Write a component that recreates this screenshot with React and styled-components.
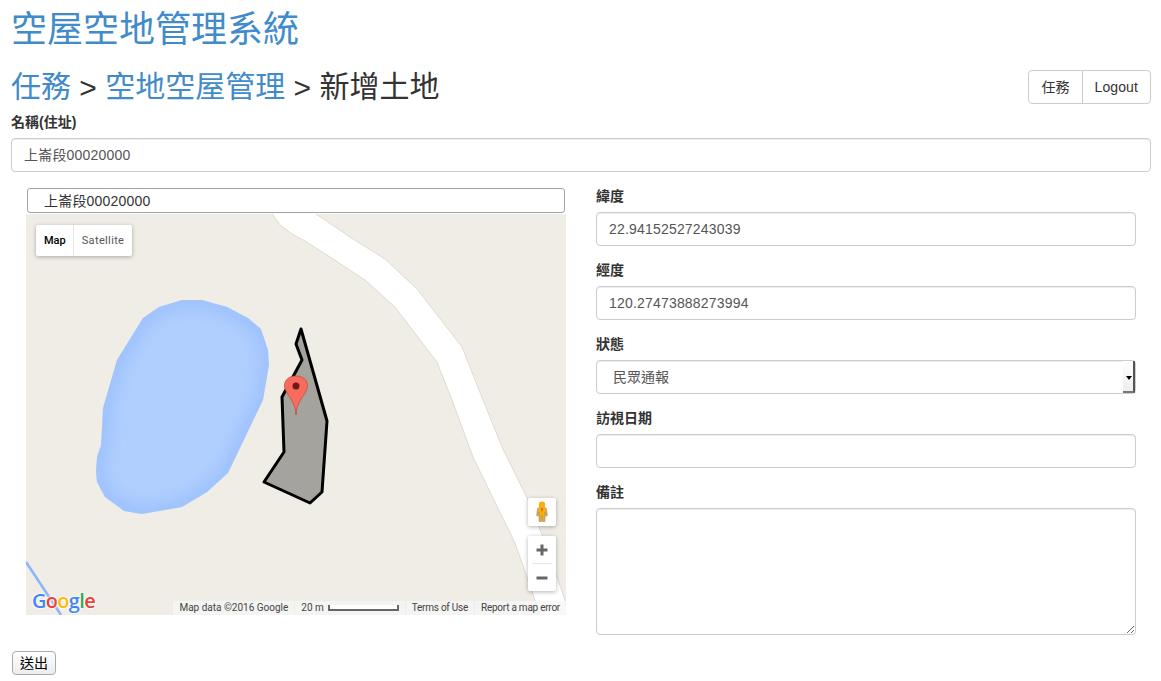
import React from 'react'
import styled, { createGlobalStyle } from 'styled-components'

const GlobalStyle = createGlobalStyle`
  * { box-sizing: border-box; }
  body {
    margin: 0;
    font-family: "Liberation Sans", "Noto Sans CJK TC", sans-serif;
    font-size: 14px;
    line-height: 20px;
    color: #333;
    background: #fff;
  }
`

const LAKE = 'M156 86 L176 86 L201 93 L222 104 L235 115 L242 136 L243 151 L237 186 L202 259 L181 278 L156 293 L116 300 L98 297 L79 283 L71 268 L70 258 L71 243 L75 231 L77 194 L91 146 L117 104 L133 93 Z'

function App() {
  return (
    <Page>
      <GlobalStyle />
      <Title><a href="#home">空屋空地管理系統</a></Title>
      <Header>
        <Crumbs>
          <a href="#tasks">任務</a> <small>&gt;</small> <a href="#land">空地空屋管理</a> <small>&gt;</small> 新增土地
        </Crumbs>
        <ButtonGroup>
          <GroupButton>任務</GroupButton>
          <GroupButton>Logout</GroupButton>
        </ButtonGroup>
      </Header>

      <Field>
        <Label>名稱(住址)</Label>
        <Input $cjk defaultValue="上崙段00020000" />
      </Field>

      <Columns>
        <div>
          <MapSearch defaultValue="上崙段00020000" />
          <MapCanvas>
            <MapDrawing />
            <TypeControl>
              <TypeButton $active>Map</TypeButton>
              <TypeButton>Satellite</TypeButton>
            </TypeControl>
            <Pegman>
              <svg width="14" height="22" viewBox="0 0 14 22">
                <path d="M4.6 6.2h4.8l2 1.4.9 7-1.4.5-.8-4-.2 9.4H7.6L7 14.5 6.4 20.5H4.1l-.2-9.4-.8 4-1.400-.5.9-7z" fill="#f6ae14" stroke="#9c9272" strokeWidth="0.7" />
                <circle cx="7" cy="3.8" r="3.2" fill="#f6ae14" />
                <path d="M5.8 7h2.4l-.5 3-.7 1-.7-1z" fill="#e2701c" />
              </svg>
            </Pegman>
            <ZoomControl>
              <ZoomButton>
                <svg width="12" height="12" viewBox="0 0 12 12"><path d="M4.5 0.5h3v4h4v3h-4v4h-3v-4h-4v-3h4z" fill="#666" /></svg>
              </ZoomButton>
              <ZoomDivider />
              <ZoomButton>
                <svg width="12" height="12" viewBox="0 0 12 12"><path d="M0.5 4.5h11v3h-11z" fill="#666" /></svg>
              </ZoomButton>
            </ZoomControl>
            <GoogleLogo>
              <span style={{ color: '#4285f4' }}>G</span>
              <span style={{ color: '#ea4335' }}>o</span>
              <span style={{ color: '#fbbc05' }}>o</span>
              <span style={{ color: '#4285f4' }}>g</span>
              <span style={{ color: '#34a853' }}>l</span>
              <span style={{ color: '#ea4335' }}>e</span>
            </GoogleLogo>
            <Attribution>
              <AttrItem>Map data ©2016 Google</AttrItem>
              <AttrItem>
                20 m
                <Scale />
              </AttrItem>
              <AttrItem $tight>Terms of Use</AttrItem>
              <AttrItem $tight>Report a map error</AttrItem>
            </Attribution>
          </MapCanvas>
        </div>

        <div>
          <Field>
            <Label>緯度</Label>
            <Input defaultValue="22.94152527243039" />
          </Field>
          <Field>
            <Label>經度</Label>
            <Input defaultValue="120.27473888273994" />
          </Field>
          <Field>
            <Label>狀態</Label>
            <SelectBox>
              <Select defaultValue="民眾通報">
                <option>民眾通報</option>
              </Select>
              <SelectArrow />
            </SelectBox>
          </Field>
          <Field>
            <Label>訪視日期</Label>
            <Input />
          </Field>
          <Field>
            <Label>備註</Label>
            <Textarea />
          </Field>
        </div>
      </Columns>

      <Submit>送出</Submit>
    </Page>
  )
}

function MapDrawing() {
  return (
    <svg width="540" height="401" viewBox="0 0 540 401">
      <defs>
        <clipPath id="lakeClip"><path d={LAKE} /></clipPath>
        <filter id="lakeBlur" x="-20%" y="-20%" width="140%" height="140%">
          <feGaussianBlur stdDeviation="9" />
        </filter>
      </defs>
      <path
        d="M247 -2 L247 1 L254 11 L266 20 L279 27 L304 43 L339 66 L369 93 L411 148 L426 186 L447 243 L489 329 L509 386 L514 403 L542 403 L539 386 L517 323 L502 286 L476 233 L457 186 L436 133 L391 75 L359 45 L327 25 L287 -2 Z"
        fill="#fff"
        stroke="#d9d4c6"
        strokeWidth="0.8"
      />
      <path d="M0 348 L35 401" stroke="#8ab4fb" strokeWidth="2.5" fill="none" />
      <path d={LAKE} fill="#b0cffe" />
      <g clipPath="url(#lakeClip)">
        <path d={LAKE} fill="none" stroke="#8fb6ff" strokeWidth="10" filter="url(#lakeBlur)" />
      </g>
      <path
        d="M275 115 L270 130 L276 146 L256 183 L258 238 L238 268 L284 289 L296 278 L301 207 Z"
        fill="#a5a39d"
        stroke="#000"
        strokeWidth="3"
        strokeLinejoin="round"
      />
      <path
        d="M270 201 C270 190 263 183 260 177 C256 170 260 162 270 162 C280 162 284 170 280 177 C277 183 270 190 270 201 Z"
        fill="#f76c5e"
        stroke="#d0483c"
        strokeWidth="0.8"
      />
      <circle cx="270" cy="172" r="3.5" fill="#6d1a14" />
    </svg>
  )
}

const Page = styled.div`
  padding: 10px 10px 0 11px;
`
const Title = styled.h1`
  margin: 0 0 20px;
  font-size: 36px;
  font-weight: 400;
  line-height: 40px;
  a { color: #428bca; text-decoration: none; }
`
const Header = styled.div`
  display: flex;
  justify-content: space-between;
  align-items: flex-start;
  height: 43px;
`
const Crumbs = styled.h2`
  margin: 0;
  font-size: 30px;
  font-weight: 400;
  line-height: 33px;
  a { color: #428bca; text-decoration: none; }
  small { font-size: 30px; position: relative; top: 1px; }
`
const ButtonGroup = styled.div`
  display: flex;
`
const GroupButton = styled.button`
  height: 34px;
  padding: 6px 12px;
  font: inherit;
  letter-spacing: 0.1px;
  color: #333;
  background: #fff;
  border: 1px solid #ccc;
  &:first-child { border-radius: 4px 0 0 4px; }
  &:last-child { border-radius: 0 4px 4px 0; margin-left: -1px; }
`
const Field = styled.div`
  margin-bottom: 15px;
`
const Label = styled.label`
  display: block;
  height: 25px;
  font-weight: 700;
  font-size: 14px;
  line-height: 18px;
`
const Input = styled.input`
  display: block;
  width: 100%;
  height: 34px;
  padding: 6px 12px ${(p) => (p.$cjk ? '8px' : '6px')};
  font: inherit;
  letter-spacing: 0.19px;
  color: #555;
  background: #fff;
  border: 1px solid #ccc;
  border-radius: 4px;
  box-shadow: inset 0 1px 1px rgba(0, 0, 0, 0.075);
`
const Columns = styled.div`
  display: grid;
  grid-template-columns: 1fr 1fr;
  > div { padding: 0 15px; }
`
const MapSearch = styled.input`
  display: block;
  width: 538px;
  height: 25px;
  margin: 1px 0 1px 1px;
  padding: 0 16px 2px;
  font: inherit;
  letter-spacing: 0.19px;
  color: #333;
  background: #fff;
  border: 1px solid #a3a3a3;
  border-radius: 3px;
`
const MapCanvas = styled.div`
  position: relative;
  width: 540px;
  height: 401px;
  overflow: hidden;
  background: #efede6;
  svg { display: block; }
`
const TypeControl = styled.div`
  position: absolute;
  top: 11px;
  left: 10px;
  display: flex;
  height: 31px;
  background: #fff;
  border-radius: 2px;
  box-shadow: 0 1px 4px rgba(0, 0, 0, 0.3);
`
const TypeButton = styled.div`
  padding: 0 ${(p) => (p.$active ? '7px' : '8px')} 0 8px;
  font-family: Roboto, sans-serif;
  font-size: 11px;
  line-height: 31px;
  letter-spacing: ${(p) => (p.$active ? '0' : '0.35px')};
  font-weight: ${(p) => (p.$active ? 500 : 400)};
  color: ${(p) => (p.$active ? '#000' : '#565656')};
  & + & { border-left: 1px solid #e6e6e6; }
`
const Pegman = styled.div`
  position: absolute;
  top: 284px;
  left: 502px;
  display: flex;
  align-items: center;
  justify-content: center;
  width: 28px;
  height: 28px;
  background: #fff;
  border-radius: 2px;
  box-shadow: 0 1px 4px rgba(0, 0, 0, 0.3);
`
const ZoomControl = styled.div`
  position: absolute;
  top: 322px;
  left: 502px;
  width: 28px;
  height: 55px;
  background: #fff;
  border-radius: 2px;
  box-shadow: 0 1px 4px rgba(0, 0, 0, 0.3);
`
const ZoomButton = styled.div`
  display: flex;
  align-items: center;
  justify-content: center;
  height: 27px;
`
const ZoomDivider = styled.div`
  height: 1px;
  margin: 0 4px;
  background: #e6e6e6;
`
const GoogleLogo = styled.div`
  position: absolute;
  left: 6px;
  bottom: 1px;
  font-family: "Open Sans", sans-serif;
  font-size: 20px;
  line-height: 26px;
  font-weight: 600;
  letter-spacing: -0.7px;
  text-shadow: 0 0 2px #fff, 0 0 2px #fff, 0 0 3px #fff;
`
const Attribution = styled.div`
  position: absolute;
  right: 0;
  bottom: 0;
  display: flex;
  height: 14px;
`
const AttrItem = styled.div`
  display: flex;
  align-items: center;
  padding: 0 6px;
  font-family: Roboto, sans-serif;
  font-size: 10px;
  line-height: 14px;
  letter-spacing: ${(p) => (p.$tight ? '-0.25px' : '0')};
  color: #444;
  white-space: nowrap;
  background: rgba(245, 245, 245, 0.75);
  & + & { margin-left: 1px; }
`
const Scale = styled.span`
  display: block;
  width: 71px;
  height: 6px;
  margin-left: 4px;
  border: 2px solid #666;
  border-top: 0;
  background: #fff;
`
const SelectBox = styled.div`
  position: relative;
`
const Select = styled.select`
  display: block;
  width: 100%;
  height: 34px;
  padding: 6px 12px 8px 16px;
  appearance: none;
  font: inherit;
  color: #555;
  background: #fff;
  border: 1px solid #ccc;
  border-radius: 4px;
  box-shadow: inset 0 1px 1px rgba(0, 0, 0, 0.075);
`
const SelectArrow = styled.span`
  position: absolute;
  top: 1px;
  right: 1px;
  width: 12px;
  height: 32px;
  background: linear-gradient(#fff, #eee);
  border-right: 2px solid #555;
  border-bottom: 2px solid #777;
  &::after {
    content: '';
    position: absolute;
    top: 15px;
    left: 3px;
    border: 3px solid transparent;
    border-top: 4px solid #000;
    border-bottom: 0;
  }
`
const Textarea = styled.textarea`
  display: block;
  width: 100%;
  height: 127px;
  padding: 6px 12px;
  font: inherit;
  color: #555;
  background: #fff;
  border: 1px solid #ccc;
  border-radius: 4px;
  box-shadow: inset 0 1px 1px rgba(0, 0, 0, 0.075);
`
const Submit = styled.button`
  display: block;
  width: 44px;
  height: 24px;
  margin: 1px 0 0 1px;
  padding: 0;
  font: inherit;
  color: #000;
  background: linear-gradient(#fff, #ececec);
  border: 1px solid #aaa;
  border-radius: 4px;
`

export default App
